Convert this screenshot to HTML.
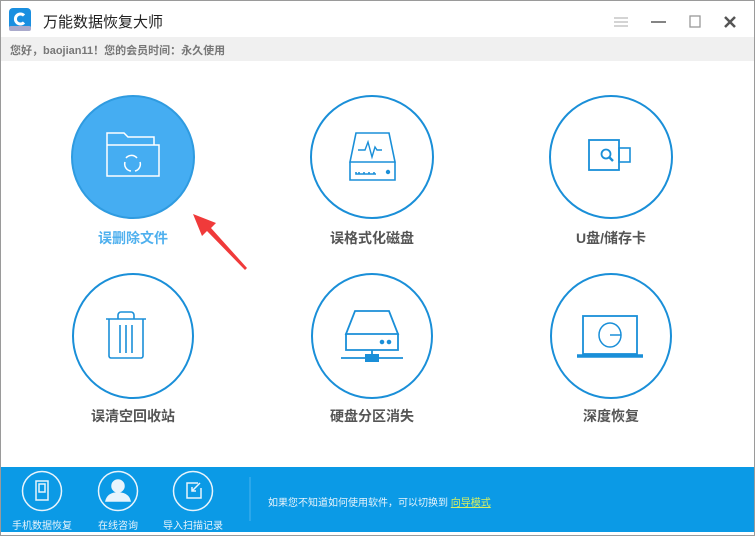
<!DOCTYPE html>
<html><head><meta charset="utf-8"><style>
*{margin:0;padding:0;box-sizing:border-box}
body{width:755px;height:536px;background:#fff;font-family:"Liberation Sans","Noto Sans CJK SC",sans-serif;position:relative;overflow:hidden}
.win{position:absolute;left:0;top:0;width:755px;height:536px;border:1px solid #9a9a9a}
.title{position:absolute;left:43px;top:11px;font-size:15px;color:#222}
.sub{position:absolute;left:1px;top:37px;width:753px;height:24px;background:#f0f0f0;font-size:11px;color:#777;padding:5px 0 0 9px;font-weight:bold}
.lbl{position:absolute;width:160px;text-align:center;font-size:14px;color:#555;font-weight:bold}
.foot{position:absolute;left:1px;top:467px;width:753px;height:65px;background:#0b9ae6}
.fl{position:absolute;font-size:10px;color:#e8f4fc;width:80px;text-align:center;top:50px}
</style></head><body>
<div class="win"></div>
<svg style="position:absolute;left:9px;top:8px" width="24" height="24"><rect x="0" y="0" width="22" height="22" rx="4" fill="#1a8fe0"/><rect x="0" y="18" width="22" height="5" rx="2" fill="#aac"/><path d="M15 7.5A5 5 0 1 0 15 14.5" stroke="#fff" stroke-width="3" fill="none"/></svg>
<div class="title">万能数据恢复大师</div>
<svg style="position:absolute;left:600px;top:10px" width="150" height="24" fill="none" stroke="#999" stroke-width="1.3">
<path d="M14 8h14M14 12h14M14 16h14" stroke="#bbb"/><path d="M51 12h15" stroke="#666" stroke-width="1.6"/><rect x="90" y="6" width="10" height="11"/><path d="M125 7l10 10M135 7l-10 10" stroke="#555" stroke-width="2.5"/></svg>
<div class="sub">您好，baojian11！您的会员时间：永久使用</div>

<svg style="position:absolute;left:0;top:0" width="755" height="467" fill="none" stroke="#1a8fd8" stroke-width="2">
<circle cx="133" cy="157" r="61" fill="#45adf2" stroke="#2f9be0"/>
<g stroke="#fff" stroke-width="1.5"><path d="M107 176V133h17l4 4h26v8M107 145h52v31h-52z"/><path d="M126 158a7 7 0 0 1 11 0M140 162a7 7 0 0 1-5 9M125 162a7 7 0 0 0 6 9"/></g>
<circle cx="372" cy="157" r="61"/>
<path d="M356 133h33l6 29H350zM350 162h45v18h-45z M356 172v2h20M359 172v2M364 172v2M369 172v2M374 172v2" stroke-width="1.6"/><circle cx="388" cy="172" r="1.2" fill="#1a8fd8"/>
<path d="M358 150h7l3-8 4 15 3-10 2 3h5" stroke-width="1.4"/>
<circle cx="611" cy="157" r="61"/>
<rect x="589" y="140" width="30" height="30" stroke-width="1.8"/><rect x="619" y="148" width="11" height="14" stroke-width="1.6"/><circle cx="606" cy="154" r="4.5" stroke-width="1.8"/><path d="M609 157l4 4" stroke-width="2.5"/>
<ellipse cx="133" cy="336" rx="60" ry="62"/>
<path d="M106 319h40M118 319v-4a3 3 0 0 1 3-3h10a3 3 0 0 1 3 3v4M109 319v37a2 2 0 0 0 2 2h30a2 2 0 0 0 2-2v-37M120 325v28M126 325v28M132 325v28" stroke-width="1.6"/>
<ellipse cx="372" cy="336" rx="60" ry="62"/>
<path d="M346 334l9-23h34l9 23zM346 334h52v16h-52zM372 350v8M341 358h62" stroke-width="1.8"/><rect x="366" y="355" width="12" height="6" fill="#1a8fd8"/><circle cx="382" cy="342" r="1.3" fill="#1a8fd8"/><circle cx="389" cy="342" r="1.3" fill="#1a8fd8"/>
<ellipse cx="611" cy="336" rx="60" ry="62"/>
<rect x="583" y="316" width="54" height="38" stroke-width="1.8"/><path d="M577 356h66" stroke-width="3.5"/><ellipse cx="610" cy="335" rx="11" ry="12" stroke-width="1.5"/><path d="M610 335h11" stroke-width="1.5"/>
<path d="M193 214L216 223L211 228L247 268L245 270L207 231L202 236Z" fill="#f03a3a" stroke="none"/>
</svg>
<div class="lbl" style="left:53px;top:228px;color:#4fb0ee">误删除文件</div>
<div class="lbl" style="left:292px;top:228px">误格式化磁盘</div>
<div class="lbl" style="left:531px;top:228px">U盘/储存卡</div>
<div class="lbl" style="left:53px;top:406px">误清空回收站</div>
<div class="lbl" style="left:292px;top:406px">硬盘分区消失</div>
<div class="lbl" style="left:531px;top:406px">深度恢复</div>

<div class="foot">
<svg style="position:absolute;left:0;top:0" width="260" height="65" fill="none" stroke="#e8f4fc" stroke-width="1.5">
<circle cx="41" cy="24" r="19.5"/><rect x="35" y="14" width="12" height="19"/><rect x="38" y="17" width="6" height="8"/>
<circle cx="117" cy="24" r="19.5"/><circle cx="117" cy="19" r="6" fill="#e8f4fc"/><path d="M105 34q2-8 12-8t12 8z" fill="#e8f4fc"/>
<circle cx="192" cy="24" r="19.5"/><path d="M197 16h-11v15h14v-10M199 16l-8 8M191 20v4h4" />
<path d="M249 10v44" stroke="#4bb4ee" stroke-width="1"/></svg>
<div class="fl" style="left:1px">手机数据恢复</div>
<div class="fl" style="left:77px">在线咨询</div>
<div class="fl" style="left:152px">导入扫描记录</div>
<div style="position:absolute;left:267px;top:27px;font-size:10px;color:#e8f4fc">如果您不知道如何使用软件，可以切换到 <span style="color:#d8f060;text-decoration:underline">向导模式</span></div>
</div>
</body></html>
